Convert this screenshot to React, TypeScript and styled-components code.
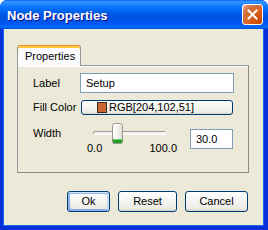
import React from "react";
import styled, { createGlobalStyle } from "styled-components";

const GlobalStyle = createGlobalStyle`
  html, body {
    margin: 0;
    padding: 0;
    background: #ffffff;
  }
  body {
    font-family: "Liberation Sans", Arial, sans-serif;
    font-size: 11px;
    color: #000;
  }
`;

const Window = styled.div`
  width: 268px;
  height: 230px;
  display: flex;
  flex-direction: column;
  border-radius: 7px 7px 0 0;
  overflow: hidden;
  background: #0831d9;
`;

const TitleBar = styled.div`
  height: 29px;
  flex: none;
  display: flex;
  align-items: center;
  justify-content: space-between;
  padding: 0 5px 0 7px;
  box-sizing: border-box;
  background: linear-gradient(
    180deg,
    #0058ee 0%,
    #3a93ff 4%,
    #288eff 10%,
    #127dff 20%,
    #036ffc 30%,
    #0262ee 40%,
    #0057e5 50%,
    #0054e3 60%,
    #0055eb 75%,
    #005bf5 85%,
    #026afe 90%,
    #0062ef 95%,
    #0052d6 100%
  );
`;

const Title = styled.span`
  color: #fff;
  font-family: "Liberation Sans", Arial, sans-serif;
  font-weight: bold;
  font-size: 13px;
  text-shadow: 1px 1px #0f1089;
  margin-top: 1px;
`;

const CloseButton = styled.div`
  width: 21px;
  height: 21px;
  box-sizing: border-box;
  border: 1px solid #fff;
  border-radius: 3px;
  display: flex;
  align-items: center;
  justify-content: center;
  background: radial-gradient(
    circle at 90% 90%,
    #cc4600 0%,
    #dc6527 55%,
    #cd7546 75%,
    #f0a07a 92%,
    #fff 100%
  );
`;

const Frame = styled.div`
  flex: 1;
  display: flex;
  flex-direction: column;
  background: #ece9d8;
  border-left: 3px solid #0831d9;
  border-right: 4px solid #0831d9;
  border-bottom: 4px solid #0831d9;
  box-shadow: inset 1px 0 #166aee, inset -1px -1px #166aee;
  padding: 16px 16px 0 14px;
`;

const TabStrip = styled.div`
  display: flex;
  height: 20px;
`;

const Tab = styled.div`
  width: 64px;
  height: 21px;
  box-sizing: border-box;
  border: 1px solid #919b9c;
  border-top: 1px solid #e68b2c;
  border-bottom: none;
  border-radius: 3px 3px 0 0;
  box-shadow: inset 0 2px #ffc73c;
  background: #fcfcfe;
  padding: 4px 0 0 7px;
  line-height: 13px;
  position: relative;
  z-index: 1;
`;

const Panel = styled.div`
  width: 232px;
  height: 108px;
  box-sizing: border-box;
  border: 1px solid #919b9c;
  border-right-color: #8b8a84;
  border-bottom-color: #8b8a84;
  box-shadow: inset 0 1px #fcfcfe;
  display: grid;
  grid-template-columns: 47px 1fr;
  grid-auto-rows: min-content;
  row-gap: 7px;
  align-items: center;
  padding: 7px 14px 0 15px;
`;

const FieldLabel = styled.div<{ $top?: number }>`
  line-height: 13px;
  align-self: ${(p) => (p.$top !== undefined ? "start" : "center")};
  margin-top: ${(p) => p.$top ?? 0}px;
`;

const TextBox = styled.input<{ $width?: number }>`
  width: ${(p) => (p.$width ? `${p.$width}px` : "100%")};
  height: 20px;
  box-sizing: border-box;
  border: 1px solid #7f9db9;
  background: #fff;
  padding: 0 0 0 5px;
  margin: 0;
  font-family: "Liberation Sans", Arial, sans-serif;
  font-size: 11px;
  color: #000;
  outline: none;
`;

const ColorButton = styled.div`
  height: 15px;
  margin: 0 1px;
  box-sizing: border-box;
  border: 1px solid #003c74;
  border-radius: 3px;
  background: linear-gradient(180deg, #fff 0%, #ecebe6 86%, #d6d0c5 100%);
  display: flex;
  align-items: center;
  gap: 2px;
  padding-left: 15px;
  line-height: 13px;
`;

const Swatch = styled.span<{ $color: string }>`
  width: 10px;
  height: 11px;
  box-sizing: border-box;
  border: 1px solid #3a2a20;
  background: ${(p) => p.$color};
`;

const SliderRow = styled.div`
  display: flex;
  align-items: flex-start;
  margin-top: 1px;
`;

const SliderBlock = styled.div`
  width: 90px;
  margin-left: 7px;
  display: flex;
  flex-direction: column;
`;

const SliderArea = styled.div`
  height: 18px;
  position: relative;
`;

const Track = styled.div`
  position: absolute;
  left: 6px;
  right: 11px;
  top: 8px;
  height: 4px;
  box-sizing: border-box;
  border: 1px solid #9d9c99;
  border-bottom-color: #fff;
  border-right-color: #fff;
  border-radius: 2px;
  background: #f3f3ef;
`;

const Thumb = styled.div`
  position: absolute;
  top: 0;
  width: 11px;
  height: 21px;
  box-sizing: border-box;
  border: 1px solid #9c9a90;
  border-radius: 3px 3px 2px 2px;
  background: linear-gradient(90deg, #ffffff 0%, #f4f3ee 50%, #e0ded6 100%);
  box-shadow: inset 0 -3px #21a121, inset 0 -4px #6fd36f, inset 0 1px #ffffff;
`;

const TickLabels = styled.div`
  display: flex;
  justify-content: space-between;
  line-height: 13px;
  padding-top: 1px;
`;

const ValueBox = styled(TextBox)`
  margin-left: 13px;
  margin-top: 6px;
`;

const ButtonRow = styled.div`
  display: flex;
  justify-content: flex-end;
  gap: 8px;
  margin-top: 18px;
`;

const Button = styled.div<{ $width: number; $default?: boolean }>`
  width: ${(p) => p.$width}px;
  height: 21px;
  box-sizing: border-box;
  border: 1px solid #003c74;
  border-radius: 3px;
  background: linear-gradient(180deg, #fff 0%, #ecebe6 86%, #d6d0c5 100%);
  display: flex;
  align-items: center;
  justify-content: center;
  line-height: 13px;
  box-shadow: ${(p) =>
    p.$default
      ? "inset -1px 1px #cee7ff, inset 1px 2px #98b8ea, inset -2px 2px #bcd4f6, inset 1px -1px #89ade4, inset 2px -2px #89ade4"
      : "none"};
`;

const sliderValue = 30;
const trackWidth = 73;
const thumbWidth = 11;

export default function App() {
  const thumbLeft = 6 + (sliderValue / 100) * (trackWidth - thumbWidth);
  return (
    <>
      <GlobalStyle />
      <Window>
        <TitleBar>
          <Title>Node Properties</Title>
          <CloseButton>
            <svg width="11" height="11" viewBox="0 0 11 11">
              <path
                d="M1.5 1.5 L9.5 9.5 M9.5 1.5 L1.5 9.5"
                stroke="#fff"
                strokeWidth="2"
                strokeLinecap="square"
              />
            </svg>
          </CloseButton>
        </TitleBar>
        <Frame>
          <TabStrip>
            <Tab>Properties</Tab>
          </TabStrip>
          <Panel>
            <FieldLabel>Label</FieldLabel>
            <TextBox defaultValue="Setup" />

            <FieldLabel>Fill Color</FieldLabel>
            <ColorButton>
              <Swatch $color="rgb(204,102,51)" />
              <span>RGB[204,102,51]</span>
            </ColorButton>

            <FieldLabel $top={5}>Width</FieldLabel>
            <SliderRow>
              <SliderBlock>
                <SliderArea>
                  <Track />
                  <Thumb style={{ left: thumbLeft }} />
                </SliderArea>
                <TickLabels>
                  <span>0.0</span>
                  <span>100.0</span>
                </TickLabels>
              </SliderBlock>
              <ValueBox $width={43} defaultValue="30.0" />
            </SliderRow>
          </Panel>
          <ButtonRow>
            <Button $width={43} $default>
              Ok
            </Button>
            <Button $width={59}>Reset</Button>
            <Button $width={63}>Cancel</Button>
          </ButtonRow>
        </Frame>
      </Window>
    </>
  );
}
